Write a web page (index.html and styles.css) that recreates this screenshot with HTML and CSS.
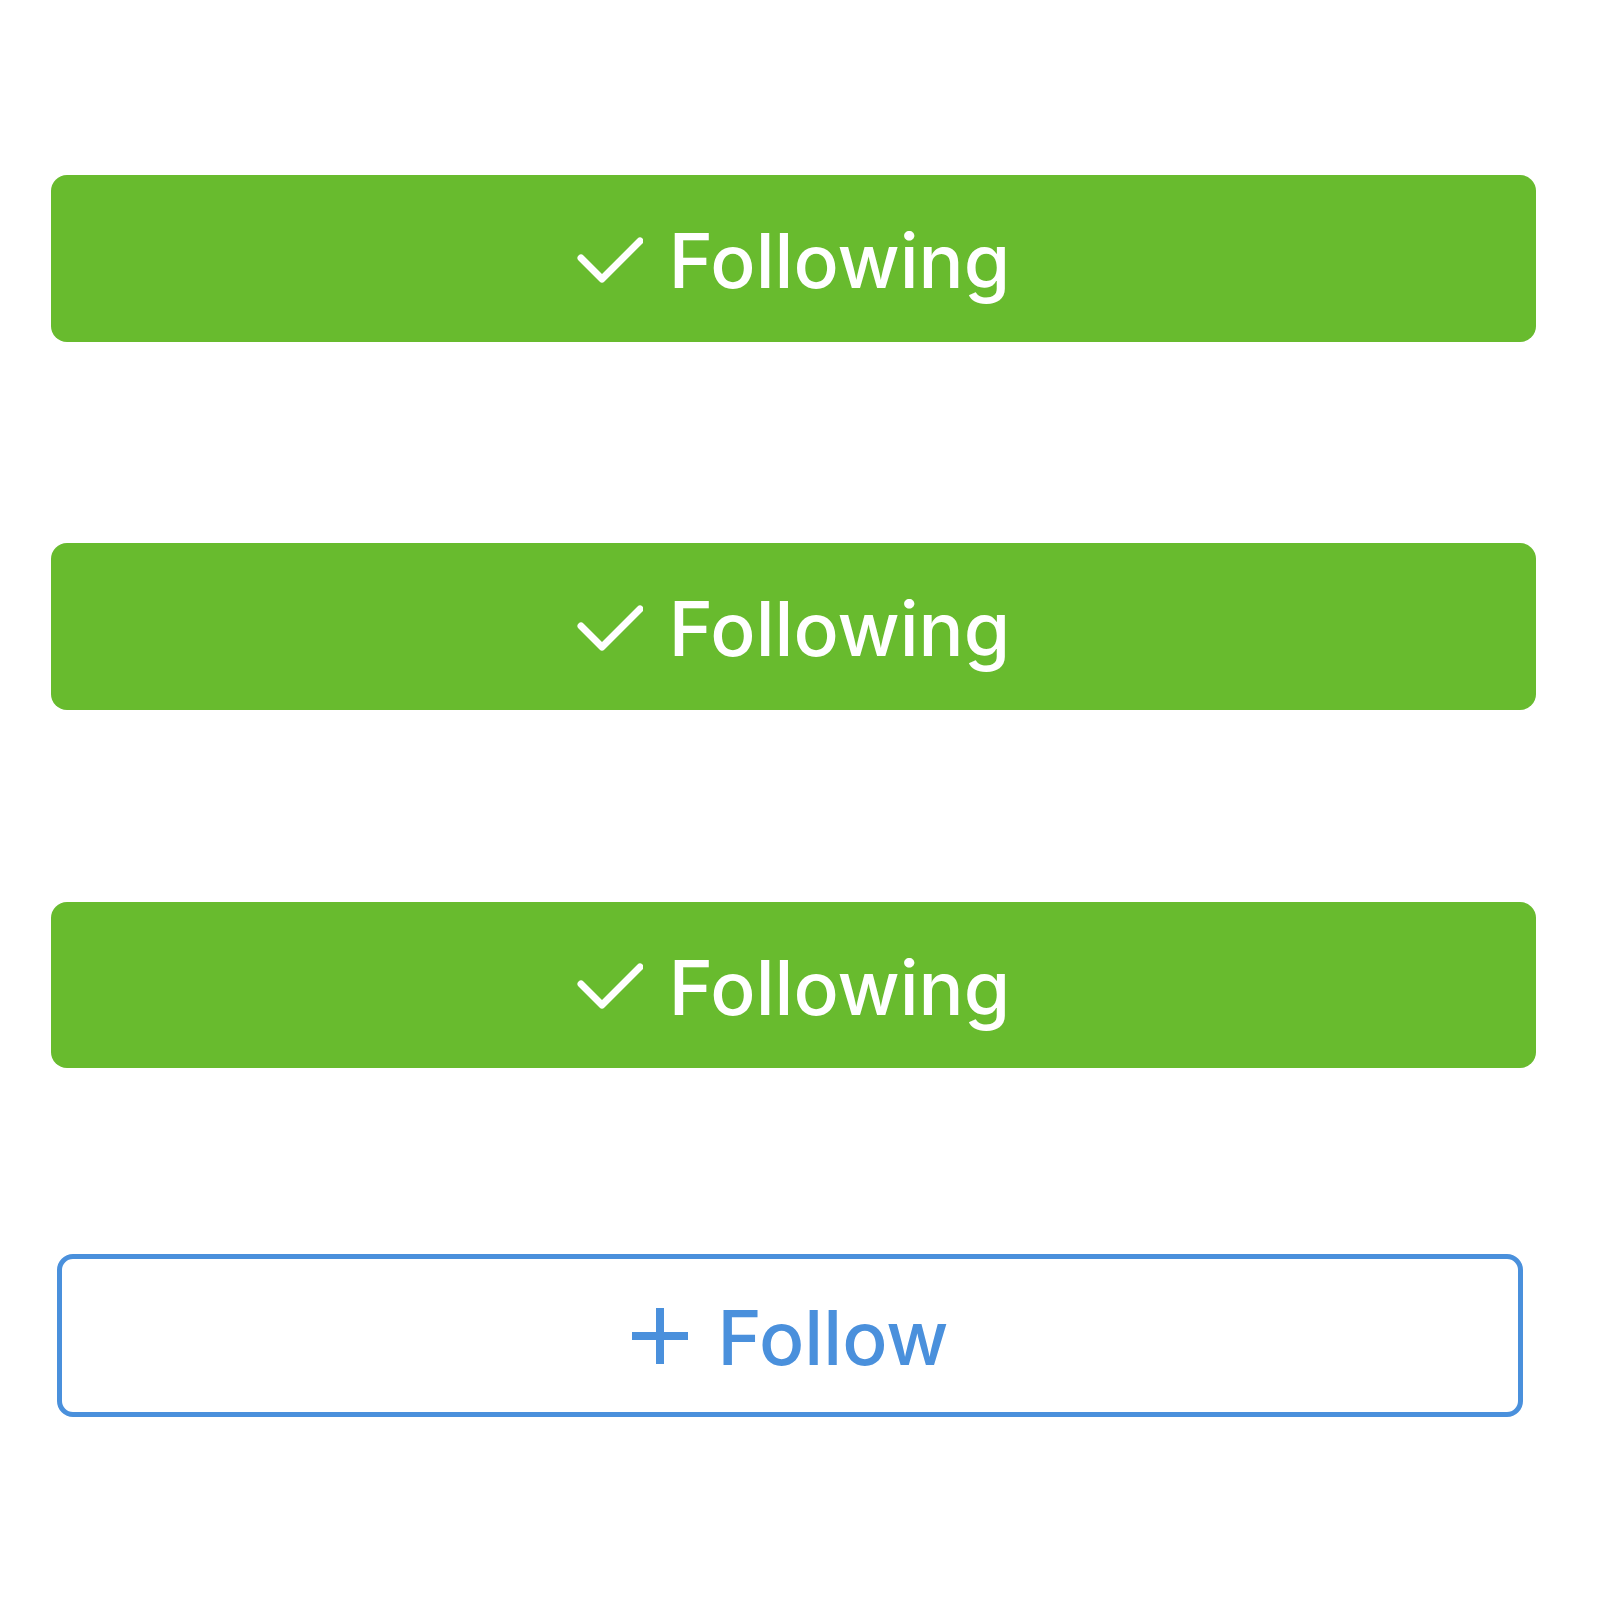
FILE: index.html
```html
<!DOCTYPE html>
<html lang="en">
<head>
    <meta charset="UTF-8">
    <meta name="viewport" content="width=device-width, initial-scale=1.0">
    <title>Follow buttons</title>
    <link rel="stylesheet" href="styles.css">
</head>
<body>
    <div class="liste">
        <button type="button" class="takip takip-ediliyor">
            <svg class="ikon-tik" width="66" height="48" viewBox="0 0 66 48"><polyline points="4,22 25,43 63,5" fill="none" stroke="#fff" stroke-width="7" stroke-linecap="round" stroke-linejoin="round"/></svg>
            <span>Following</span>
        </button>
        <button type="button" class="takip takip-ediliyor">
            <svg class="ikon-tik" width="66" height="48" viewBox="0 0 66 48"><polyline points="4,22 25,43 63,5" fill="none" stroke="#fff" stroke-width="7" stroke-linecap="round" stroke-linejoin="round"/></svg>
            <span>Following</span>
        </button>
        <button type="button" class="takip takip-ediliyor">
            <svg class="ikon-tik" width="66" height="48" viewBox="0 0 66 48"><polyline points="4,22 25,43 63,5" fill="none" stroke="#fff" stroke-width="7" stroke-linecap="round" stroke-linejoin="round"/></svg>
            <span>Following</span>
        </button>
        <button type="button" class="takip takip-et">
            <svg class="ikon-arti" width="56" height="56" viewBox="0 0 56 56"><path d="M28 0V56M0 28H56" stroke="#4a90dc" stroke-width="8"/></svg>
            <span>Follow</span>
        </button>
    </div>
</body>
</html>
```

FILE: styles.css
```css
*{
    margin: 0;
    padding: 0;
    box-sizing: border-box;
}
body{
    background-color: #fff;
    font-family: Inter, "Liberation Sans", Arial, sans-serif;
}
.liste{
    display: flex;
    flex-direction: column;
    padding-top: 175px;
}
.takip{
    display: flex;
    align-items: center;
    justify-content: center;
    font-family: inherit;
    font-size: 75px;
    font-weight: 500;
    letter-spacing: 0;
    cursor: pointer;
}
.takip-ediliyor{
    height: 167px;
    width: 1485px;
    margin-left: 51px;
    background-color: #68bb2e;
    color: #fff;
    border: none;
    border-radius: 16px;
    gap: 26px;
}
.takip-ediliyor:nth-child(2){
    margin-top: 201px;
}
.takip-ediliyor:nth-child(3){
    margin-top: 192px;
    height: 166px;
}
.takip-ediliyor span{
    position: relative;
    top: 2px;
}
.ikon-tik{
    margin-top: 2px;
}
.takip-et{
    height: 163px;
    width: 1466px;
    margin-left: 57px;
    margin-top: 186px;
    background-color: #fff;
    color: #4a90dc;
    border: 5px solid #4a90dc;
    border-radius: 16px;
    gap: 30px;
}
.takip-et span{
    position: relative;
    top: 2px;
}
```
